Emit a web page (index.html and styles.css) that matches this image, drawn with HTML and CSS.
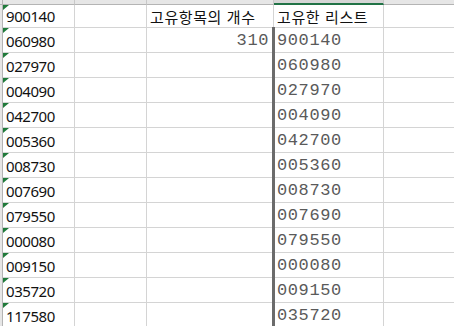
FILE: index.html
```html
<!DOCTYPE html>
<html lang="ko">
<head>
<meta charset="utf-8">
<link rel="stylesheet" href="styles.css">
</head>
<body>
<div class="sheet">
  <div class="grid">
    <div class="hd rh"></div><div class="hd"></div><div class="hd"></div><div class="hd"></div><div class="hd sel"></div><div class="hd last"></div>

    <div class="rh"></div><div class="c a"><span class="t">900140</span></div><div class="c"></div><div class="c k"><span>고유항목의 개수</span></div><div class="c k"><span>고유한 리스트</span></div><div class="c"></div>
    <div class="rh"></div><div class="c a"><span class="t">060980</span></div><div class="c"></div><div class="c m r"><span>310</span></div><div class="c m"><span>900140</span></div><div class="c"></div>
    <div class="rh"></div><div class="c a"><span class="t">027970</span></div><div class="c"></div><div class="c"></div><div class="c m"><span>060980</span></div><div class="c"></div>
    <div class="rh"></div><div class="c a"><span class="t">004090</span></div><div class="c"></div><div class="c"></div><div class="c m"><span>027970</span></div><div class="c"></div>
    <div class="rh"></div><div class="c a"><span class="t">042700</span></div><div class="c"></div><div class="c"></div><div class="c m"><span>004090</span></div><div class="c"></div>
    <div class="rh"></div><div class="c a"><span class="t">005360</span></div><div class="c"></div><div class="c"></div><div class="c m"><span>042700</span></div><div class="c"></div>
    <div class="rh"></div><div class="c a"><span class="t">008730</span></div><div class="c"></div><div class="c"></div><div class="c m"><span>005360</span></div><div class="c"></div>
    <div class="rh"></div><div class="c a"><span class="t">007690</span></div><div class="c"></div><div class="c"></div><div class="c m"><span>008730</span></div><div class="c"></div>
    <div class="rh"></div><div class="c a"><span class="t">079550</span></div><div class="c"></div><div class="c"></div><div class="c m"><span>007690</span></div><div class="c"></div>
    <div class="rh"></div><div class="c a"><span class="t">000080</span></div><div class="c"></div><div class="c"></div><div class="c m"><span>079550</span></div><div class="c"></div>
    <div class="rh"></div><div class="c a"><span class="t">009150</span></div><div class="c"></div><div class="c"></div><div class="c m"><span>000080</span></div><div class="c"></div>
    <div class="rh"></div><div class="c a"><span class="t">035720</span></div><div class="c"></div><div class="c"></div><div class="c m"><span>009150</span></div><div class="c"></div>
    <div class="rh"></div><div class="c a"><span class="t">117580</span></div><div class="c"></div><div class="c"></div><div class="c m"><span>035720</span></div><div class="c"></div>
  </div>
  <div class="copyline"></div>
</div>
</body>
</html>
```
FILE: styles.css
```css
html, body {
  margin: 0;
  padding: 0;
  background: #ffffff;
  overflow: hidden;
}
.sheet {
  position: relative;
  width: 454px;
  height: 326px;
  overflow: hidden;
}
.grid {
  display: grid;
  grid-template-columns: 3px 72px 72px 127px 110px 80px;
  grid-template-rows: 5px 23px repeat(12, 25px) 25px;
}
.hd {
  background: #e6e6e6;
  border-right: 1px solid #c8c8c8;
  border-bottom: 1px solid #b4b4b4;
  box-sizing: border-box;
}
.hd.sel {
  background: #d6d6d6;
  border-bottom: 2px solid #217346;
  border-right: 1px solid #c8c8c8;
}
.hd.last { border-right: none; }
.rh {
  background: #e6e6e6;
  border-right: 1px solid #b4b4b4;
  box-sizing: border-box;
}
.hd.rh { border-bottom: 1px solid #b4b4b4; }
.c {
  position: relative;
  box-sizing: border-box;
  border-right: 1px solid #d4d4d4;
  border-bottom: 1px solid #d4d4d4;
  display: flex;
  align-items: flex-end;
  padding: 0 3px 3px 3px;
  font-family: "Noto Sans", "Noto Sans CJK KR", sans-serif;
  font-size: 15px;
  letter-spacing: -0.45px;
  line-height: 1;
  color: #111111;
  white-space: nowrap;
  overflow: visible;
}
.c.a::before {
  content: "";
  position: absolute;
  left: 0;
  top: 0;
  border-top: 5px solid #1f7a3a;
  border-right: 6px solid transparent;
}
.c.k {
  font-family: "Noto Sans CJK KR", sans-serif;
  font-size: 15px;
  letter-spacing: 0.6px;
  padding-left: 3px;
  padding-bottom: 3px;
  color: #111111;
}
.c.m {
  font-family: "Liberation Mono", monospace;
  font-size: 17px;
  letter-spacing: 0.6px;
  color: #5a5a5a;
  padding-left: 3px;
  padding-bottom: 3px;
}
.c.r {
  justify-content: flex-end;
  padding-right: 4px;
}
.copyline {
  position: absolute;
  left: 272px;
  top: 27px;
  width: 3px;
  bottom: 0;
  background: #6b6b6b;
}
```
